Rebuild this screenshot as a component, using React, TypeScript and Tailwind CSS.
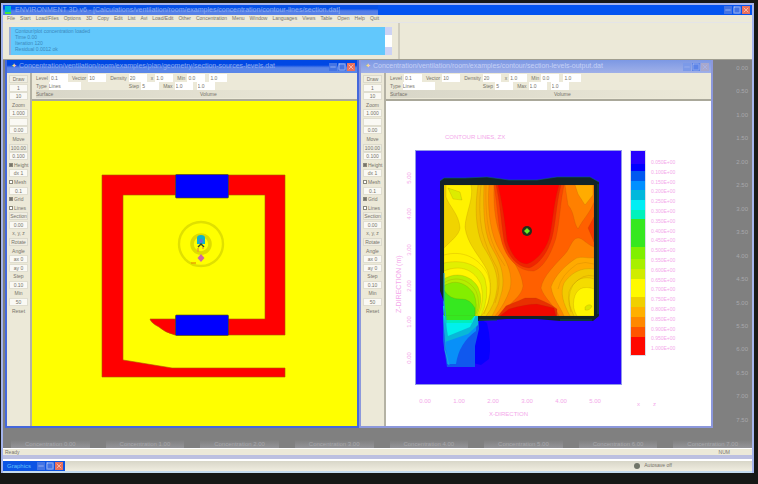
import React from 'react';
import { Minus, Square, X } from 'lucide-react';

const menuItems = ['File', 'Start', 'Load/Files', 'Options', '3D', 'Copy', 'Edit', 'List', 'Avi', 'Load/Edit', 'Other', 'Concentration', 'Menu', 'Window', 'Languages', 'Views', 'Table', 'Open', 'Help', 'Quit'];

const consoleLines = ['Contour/plot concentration loaded', 'Time 0.00', 'Iteration 120', 'Residual 0.0012 ok'];

const sideRows = [
	{ kind: 'button', label: 'Draw' },
	{ kind: 'input', label: '1' },
	{ kind: 'input', label: '10' },
	{ kind: 'text', label: 'Zoom' },
	{ kind: 'input', label: '1.000' },
	{ kind: 'input', label: '' },
	{ kind: 'input', label: '0.00' },
	{ kind: 'text', label: 'Move' },
	{ kind: 'button', label: '100.00' },
	{ kind: 'input', label: '0.100' },
	{ kind: 'check', label: 'Height' },
	{ kind: 'input', label: 'dx 1' },
	{ kind: 'check', label: 'Mesh' },
	{ kind: 'input', label: '0.1' },
	{ kind: 'check', label: 'Grid' },
	{ kind: 'check', label: 'Lines' },
	{ kind: 'button', label: 'Section' },
	{ kind: 'input', label: '0.00' },
	{ kind: 'text', label: 'x, y, z' },
	{ kind: 'button', label: 'Rotate' },
	{ kind: 'text', label: 'Angle' },
	{ kind: 'input', label: 'ax 0' },
	{ kind: 'input', label: 'ay 0' },
	{ kind: 'text', label: 'Step' },
	{ kind: 'input', label: '0.10' },
	{ kind: 'text', label: 'Min' },
	{ kind: 'input', label: '50' },
	{ kind: 'text', label: 'Reset' },
];

const scaleBands = [
	{ y: 50, h: 13, fill: '#2600ff' },
	{ y: 63, h: 7, fill: '#0000ff' },
	{ y: 70, h: 10, fill: '#0058f0' },
	{ y: 80, h: 9, fill: '#0090ff' },
	{ y: 89, h: 10, fill: '#00b8dc' },
	{ y: 99, h: 10, fill: '#00eef4' },
	{ y: 109, h: 9, fill: '#00f2bc' },
	{ y: 118, h: 28, fill: '#36e820' },
	{ y: 146, h: 12, fill: '#80f000' },
	{ y: 158, h: 10, fill: '#a8f000' },
	{ y: 168, h: 10, fill: '#d0ec00' },
	{ y: 178, h: 18, fill: '#fffa00' },
	{ y: 196, h: 10, fill: '#f0d000' },
	{ y: 206, h: 10, fill: '#ffb000' },
	{ y: 216, h: 10, fill: '#ff8800' },
	{ y: 226, h: 10, fill: '#ff5500' },
	{ y: 236, h: 18, fill: '#ff0800' },
];

const scaleLabels = Array.from({ length: 20 }, (_, i) => `${((i + 1) * 0.05).toFixed(3)}E+00`);

const xTicks = ['0.00', '1.00', '2.00', '3.00', '4.00', '5.00'];

const RoomPlan: React.FC = () => (
	<svg viewBox="0 0 325 325" className="block w-full bg-[#ffff00]" role="img" aria-label="Room plan">
		<path
			d="M70 74H253V234H143Q132 231 127 226Q119 222 118 218H233V94H91V259L140 267H253V276H70Z"
			fill="#ff0000"
			stroke="#a85a00"
			strokeWidth="0.6"
		/>
		<rect x="143.5" y="73.5" width="53" height="23.5" rx="1" fill="#0000ff" stroke="#555500" strokeWidth="0.6" />
		<rect x="143.5" y="214" width="53" height="20.5" rx="1" fill="#0000ff" stroke="#555500" strokeWidth="0.6" />
		<circle cx="169" cy="143" r="22" fill="none" stroke="#e0e000" strokeWidth="2.4" />
		<circle cx="169" cy="143" r="9" fill="none" stroke="#dedc00" strokeWidth="3.6" />
		<path d="M165 143V137Q165 134 169 134Q173 134 173 137V143Z" fill="#10b4c8" />
		<circle cx="169" cy="140" r="2" fill="#6670d8" />
		<path d="M166 146L169 143L172 146" fill="none" stroke="#3c4a20" strokeWidth="1.4" />
		<path d="M166 147V151M171 146V148" fill="none" stroke="#e8a030" strokeWidth="1.4" />
		<path d="M169 153L172.5 157L169 161L165.5 157Z" fill="#d068a0" />
		<path d="M159 162H164" fill="none" stroke="#e8a000" strokeWidth="1.4" />
	</svg>
);

const ContourPlot: React.FC = () => (
	<svg viewBox="-1 0 325 325" className="block w-full bg-white font-['Liberation_Sans']" role="img" aria-label="Contour plot">
		<defs>
			<clipPath id="room">
				<rect x="57" y="84" width="150" height="131" />
			</clipPath>
		</defs>
		<rect x="28.5" y="49.5" width="206" height="234" fill="#2600ff" stroke="#9098e8" strokeWidth="1" />

		{/* outflow below the room */}
		<path d="M90 216L100 222Q105 242 102 258L94 264L86 262Z" fill="#0800ff" />
		<path d="M56 200H91L92 228L88 245V266H60L56 240Z" fill="#1058ee" />
		<path d="M57 218L90 218L89 230Q72 242 69 263H60Z" fill="#0890f8" />
		<path d="M56 214H91V224L81 233L58 241Z" fill="#08b8d8" />
		<path d="M57 212H90L83 226L61 235Z" fill="#00f0ec" />
		<path d="M56 205H90L85 222H58Z" fill="#00eebc" />
		<path d="M58 213H89L84 219H59Z" fill="#36e820" />

		<path d="M53 80L57 77H78L100 76L122 79H150L170 76H203L212 81V215L206 220H173L150 218H120L91 220V214H207V84H57V201L53 190Z" fill="#122428" />

		<g clipPath="url(#room)" stroke="#8a4800" strokeOpacity="0.3" strokeWidth="0.5">
			<rect x="57" y="84" width="150" height="131" fill="#ff6000" />
			{/* left side lobes */}
			<path d="M57 84H107C106 112 110 132 120 150C128 163 135 173 136 185C135 196 121 203 112 215H57Z" fill="#ff8400" />
			<path d="M57 84H102C100 112 104 135 113 150C121 162 126 175 123 188Q118 203 108 215H57Z" fill="#fca000" />
			<path d="M57 84H97C96 112 97 134 106 149C114 162 118 176 115 190Q112 204 105 215H57Z" fill="#f2bc00" />
			<path d="M57 84H91C88 104 88 128 96 145C105 159 112 173 110 188Q108 204 99 215H57Z" fill="#f0d400" />
			<path d="M59 84H84C87 98 79 110 78 126C80 143 92 154 100 169C107 185 103 204 94 215H57V147C65 139 72 134 73 127C72 113 62 105 59 96Z" fill="#fff200" />
			<path d="M61 87L73 91L75 99L66 98Z" fill="#dcec00" />
			<path d="M57 162C75 158 92 163 98 178Q103 196 94 215H57Z" fill="#e2f000" />
			<path d="M57 170C74 163 88 169 94 184Q98 199 91 215H57Z" fill="#fff600" />
			<path d="M57 178C68 171 83 173 91 186Q97 199 90 215H57Z" fill="#b4ee00" />
			<path d="M57 185C67 178 79 181 87 193Q91 203 88 215H57Z" fill="#84ee00" />
			<path d="M57 189Q63 199 75 198Q83 198 88 207V215H57Z" fill="#36e820" />

			{/* right side lobes */}
			<path d="M178 84H207V101C203 112 196 118 191 128C186 121 188 112 181 104Z" fill="#ff8000" />
			<path d="M188 84H206V94L198 104L191 93Z" fill="#ffac00" />
			<path d="M207 116L201 127L207 141Z" fill="#f63800" />
			<path d="M207 146C199 143 196 137 191 137C185 137 183 148 178 153C168 164 156 175 154 187C157 197 168 205 172 215H207Z" fill="#ff8400" />
			<path d="M207 157C197 157 193 155 188 158C179 164 168 174 164 186C166 198 173 205 177 215H207Z" fill="#ffaa00" />
			<path d="M207 168C194 166 184 172 177 182C173 192 176 202 183 215H207Z" fill="#f2ca00" />
			<path d="M207 178C195 174 186 180 182 191C181 202 184 208 187 215H207Z" fill="#f4dc00" />
			<path d="M207 188C196 184 189 188 187 198Q185 207 190 215H207Z" fill="#fff600" />
			<path d="M198 206Q202 202 205 205Q203 210 198 209Z" fill="#dce800" />

			{/* jet from the inlet */}
			<path d="M107 84H177C173 102 173 120 169 137C164 153 157 166 147 170C132 171 118 157 114 138C111 121 110 102 107 84Z" fill="#fa4400" />
			<path d="M109 84H174C169 104 169 122 165 137C161 151 152 164 142 167C130 166 121 155 117 140C114 120 113 102 109 84Z" fill="#f02400" />
			<path d="M111 84H172C166 104 166 124 162 138C158 150 149 160 140 163C131 163 124 153 120 140C118 122 116 106 111 84Z" fill="#ff0000" />
			<path d="M111 215L119 205Q131 200 138 197H149Q164 203 170 208V215Z" fill="#e83000" />
			<path d="M113 215L122 208Q139 203 150 203L167 207L169 215Z" fill="#f00800" />
		</g>
		<g clipPath="url(#room)" fill="none" stroke="#a06000" strokeOpacity="0.3" strokeWidth="0.6">
			<path d="M94 84Q91 110 95 130Q100 150 110 167Q115 182 108 202" />
			<path d="M99 84Q98 110 102 130Q106 148 118 165" />
			<path d="M57 154C75 149 92 156 101 174Q107 190 97 213" />
			<path d="M57 182C67 175 81 177 89 190Q94 202 89 213" />
			<path d="M184 211Q179 196 186 184Q196 172 207 175" />
			<path d="M171 188Q174 174 190 163Q198 160 207 163" />
		</g>
		<path d="M53 80L57 77H78L100 76L122 79H150L170 76H203L212 81" fill="none" stroke="#086478" strokeWidth="0.6" />
		<path d="M92 219H110M173 219H205M211 83V213" fill="none" stroke="#08504c" strokeWidth="1" />
		<path d="M57 172V202L59 218L58 249L62 264" fill="none" stroke="#18a8e0" strokeWidth="1" />
		<circle cx="140" cy="130" r="5" fill="#20321c" />
		<path d="M140 127L143 130L140 133L137 130Z" fill="#6ce820" />

		<rect x="243" y="49" width="16" height="206" fill="#d8dce8" />
		{scaleBands.map((band) => (
			<rect key={band.y} x="244" y={band.y} width="14" height={band.h} fill={band.fill} />
		))}

		<g fill="#f4a8ea" fontSize="5">
			{scaleLabels.map((label, i) => (
				<text key={label} x="264" y={63 + i * 9.8}>
					{label}
				</text>
			))}
			<text x="58" y="38" fontSize="6">
				CONTOUR LINES, ZX
			</text>
			{xTicks.map((tick, i) => (
				<g key={tick} fontSize="6">
					<text x={38 + i * 34} y="302" textAnchor="middle">
						{tick}
					</text>
					<text x={24} y={257 - i * 36} textAnchor="middle" transform={`rotate(-90 24 ${257 - i * 36})`}>
						{tick}
					</text>
				</g>
			))}
			<text x="102" y="315" fontSize="6">
				X-DIRECTION
			</text>
			<text x="14" y="212" fontSize="7" transform="rotate(-90 14 212)">
				Z-DIRECTION (m)
			</text>
			<text x="250" y="305" fontSize="6">
				x
			</text>
			<text x="266" y="305" fontSize="6">
				z
			</text>
		</g>
	</svg>
);

const WindowButtons: React.FC<{ active?: boolean }> = ({ active = true }) => (
	<div className={`flex shrink-0 items-center gap-px px-0.5 ${active ? 'text-[#b8ccf8]' : 'text-[#a8b8f0]'}`}>
		<button aria-label="Minimize" className={active ? 'bg-[#4474e4]' : 'bg-[#7c9ae8]'}>
			<Minus size={8} />
		</button>
		<button aria-label="Maximize" className={active ? 'bg-[#4474e4]' : 'bg-[#5c84e8]'}>
			<Square size={8} />
		</button>
		<button aria-label="Close" className={active ? 'bg-[#e8705c] text-[#fcd8cc]' : 'bg-[#a8a8cc]'}>
			<X size={8} />
		</button>
	</div>
);

const SidePanel: React.FC<{ name: string }> = ({ name }) => (
	<aside className="w-[25px] shrink-0 overflow-hidden border-r-2 border-[#b4b2a4] bg-[#ece9d8] px-0.5 pt-0.5 text-[5px] leading-[8px] text-[#77746a]">
		<div className="flex h-60 flex-col justify-between">
			{sideRows.map((row, i) => (
				<div key={i} className="flex h-2 items-center">
					{row.kind === 'button' && <button className="h-2 w-full border border-[#dcdacc] bg-[#f0eee2] leading-[6px]">{row.label}</button>}
					{row.kind === 'input' && (
						<input aria-label={`${name} value ${i}`} defaultValue={row.label} className="h-2 w-full border border-[#e0ded0] bg-[#faf9f4] text-center" />
					)}
					{row.kind === 'text' && <span className="w-full text-center whitespace-nowrap">{row.label}</span>}
					{row.kind === 'check' && (
						<label className="flex items-center gap-px">
							<input type="checkbox" className="size-1 appearance-none border border-[#8a887c] bg-white checked:bg-[#77746a]" defaultChecked={i % 4 === 2} />
							{row.label}
						</label>
					)}
				</div>
			))}
		</div>
	</aside>
);

const Field: React.FC<{ label: string; name: string; value: string }> = ({ label, name, value }) => (
	<label className="flex items-center gap-0.5">
		{label}
		<input aria-label={`${name} ${label || 'value'}`} defaultValue={value} className="h-2 w-[18px] bg-white px-px" />
	</label>
);

const ToolPanel: React.FC<{ name: string }> = ({ name }) => (
	<div className="h-7 overflow-hidden border-b-2 border-[#aaa89a] bg-[#ece9d8] px-1 pt-px text-[5px] leading-[8px] whitespace-nowrap text-[#77746a]">
		<div className="flex gap-1">
			<Field name={name} label="Level" value="0.1" />
			<Field name={name} label="Vector" value="10" />
			<Field name={name} label="Density" value="20" />
			<Field name={name} label="x" value="1.0" />
			<Field name={name} label="Min" value="0.0" />
			<Field name={name} label="" value="1.0" />
		</div>
		<div className="flex gap-1">
			<label className="flex items-center gap-0.5">
				Type
				<select defaultValue="Lines" className="h-2 w-8 appearance-none bg-white">
					<option>Lines</option>
					<option>Filled</option>
				</select>
			</label>
			<div className="w-10" />
			<Field name={name} label="Step" value="5" />
			<Field name={name} label="Max" value="1.0" />
			<Field name={name} label="" value="1.0" />
		</div>
		<div className="flex gap-1 bg-linear-to-r from-[#d8d6c8] to-[#ece9d8]">
			<span className="w-40">Surface</span>
			<span>Volume</span>
		</div>
	</div>
);

interface PlotWindowProps {
	title: string;
	active?: boolean;
	children: React.ReactNode;
}

const PlotWindow: React.FC<PlotWindowProps> = ({ title, active = false, children }) => (
	<section className={`min-w-0 flex-1 border-x-2 border-b-2 ${active ? 'border-[#4468dc]' : 'border-[#8c98dc]'}`}>
		<header
			className={`flex h-[13px] items-center justify-between text-[7px] ${
				active ? 'bg-linear-to-b from-[#0048e4] from-40% to-[#5a86e8] to-60% text-[#8cacf0]' : 'bg-linear-to-b from-[#7c98e4] to-[#a0b0e8] text-[#c4d0f6]'
			}`}
		>
			<h2 className="truncate px-1">
				<span className="text-[#f8d890]">✦</span> {title}
			</h2>
			<WindowButtons active={active} />
		</header>
		<div className="flex">
			<SidePanel name={title} />
			<div className="flex min-w-0 flex-1 flex-col">
				<ToolPanel name={title} />
				{children}
			</div>
		</div>
	</section>
);

const App: React.FC = () => {
	return (
		<div className="flex min-h-screen flex-col bg-[#161816] pt-[3px] pr-1 pb-[11px] pl-px font-['Liberation_Sans',sans-serif]">
			<div className="flex flex-1 flex-col border-x-2 border-[#a4b4ec] bg-[#ece9d8]">
				<header className="flex h-3 items-center justify-between border-t-2 border-[#a4b4ec] bg-[#0454f0] text-[7px] text-[#8cacf0]">
					<div className="flex h-full w-1/2 items-center gap-1 bg-linear-to-b from-[#0450e8] from-40% to-[#5580e8] to-60%">
						<span className="ml-0.5 h-2 w-1.5 shrink-0 border-b-2 border-[#48e838] bg-[#00b8d4]" />
						<h1 className="truncate">ENVIRONMENT 3D v6 - [Calculations/ventilation/room/examples/concentration/contour-lines/section.dat]</h1>
					</div>
					<WindowButtons />
				</header>
				<nav className="flex h-2 gap-[5px] border-b border-[#e4e4e8] px-1 text-[5px] leading-[7px] whitespace-nowrap text-[#77746a]">
					{menuItems.map((item) => (
						<button key={item}>{item}</button>
					))}
				</nav>
				<div className="flex h-[37px] border-b border-[#a09e90]">
					<div className="flex w-[53%] border-r-2 border-[#d0cdbe] px-1.5 py-1">
						<div className="flex-1 border-l-2 border-[#9cacd4] bg-[#62c8fc] pt-px pl-1 text-[5px] leading-[6px] text-[#3c88bc]">
							{consoleLines.map((line) => (
								<p key={line}>{line}</p>
							))}
						</div>
						<div className="flex w-[7px] flex-col justify-between bg-white">
							<button aria-label="Scroll up" className="h-2 bg-[#ccd2f4]" />
							<button aria-label="Scroll down" className="h-2 bg-[#ccd2f4]" />
						</div>
					</div>
				</div>
				<main className="flex flex-1 flex-col bg-[#808080] text-[6px] text-[#a8a8ac]">
					<div className="flex pl-0.5">
						<PlotWindow active title="Concentration/ventilation/room/examples/plan/geometry/section-sources-levels.dat">
							<RoomPlan />
						</PlotWindow>
						<PlotWindow title="Concentration/ventilation/room/examples/contour/section-levels-output.dat">
							<ContourPlot />
						</PlotWindow>
						<div className="flex w-[39px] shrink-0 flex-col justify-between py-1 pr-1 text-right leading-[8px]">
							{Array.from({ length: 16 }, (_, i) => (
								<span key={i}>{(i * 0.5).toFixed(2)}</span>
							))}
						</div>
					</div>
					<div className="flex flex-1 items-end gap-4 overflow-hidden pl-2 leading-[8px] whitespace-nowrap">
						{Array.from({ length: 8 }, (_, i) => (
							<span key={i} className="flex-1 bg-linear-to-b from-[#808080] to-[#949498] text-center">
								Concentration {i}.00
							</span>
						))}
					</div>
				</main>
				<div className="flex h-[7px] justify-between border-t border-white px-0.5 text-[5px] leading-[6px] text-[#77746a]">
					<span>Ready</span>
					<span className="mr-5">NUM</span>
				</div>
				<div className="h-1 bg-[#bcc0e0]" />
				<footer className="flex h-3.5 justify-between border-y-2 border-t-white border-b-[#c4dcf0] bg-linear-to-b from-[#d8d6c8] to-[#f0ede0] text-[5px] text-[#77746a]">
					<div className="flex w-[62px] items-center justify-between bg-[#0c54e4] pl-1 text-[6px] text-[#60c0fc]">
						<span>Graphics</span>
						<WindowButtons />
					</div>
					<div className="mr-20 flex items-center gap-1">
						<span className="size-1.5 rounded-sm bg-[#707468]" />
						<span>Autosave off</span>
					</div>
				</footer>
			</div>
		</div>
	);
};

export default App;
